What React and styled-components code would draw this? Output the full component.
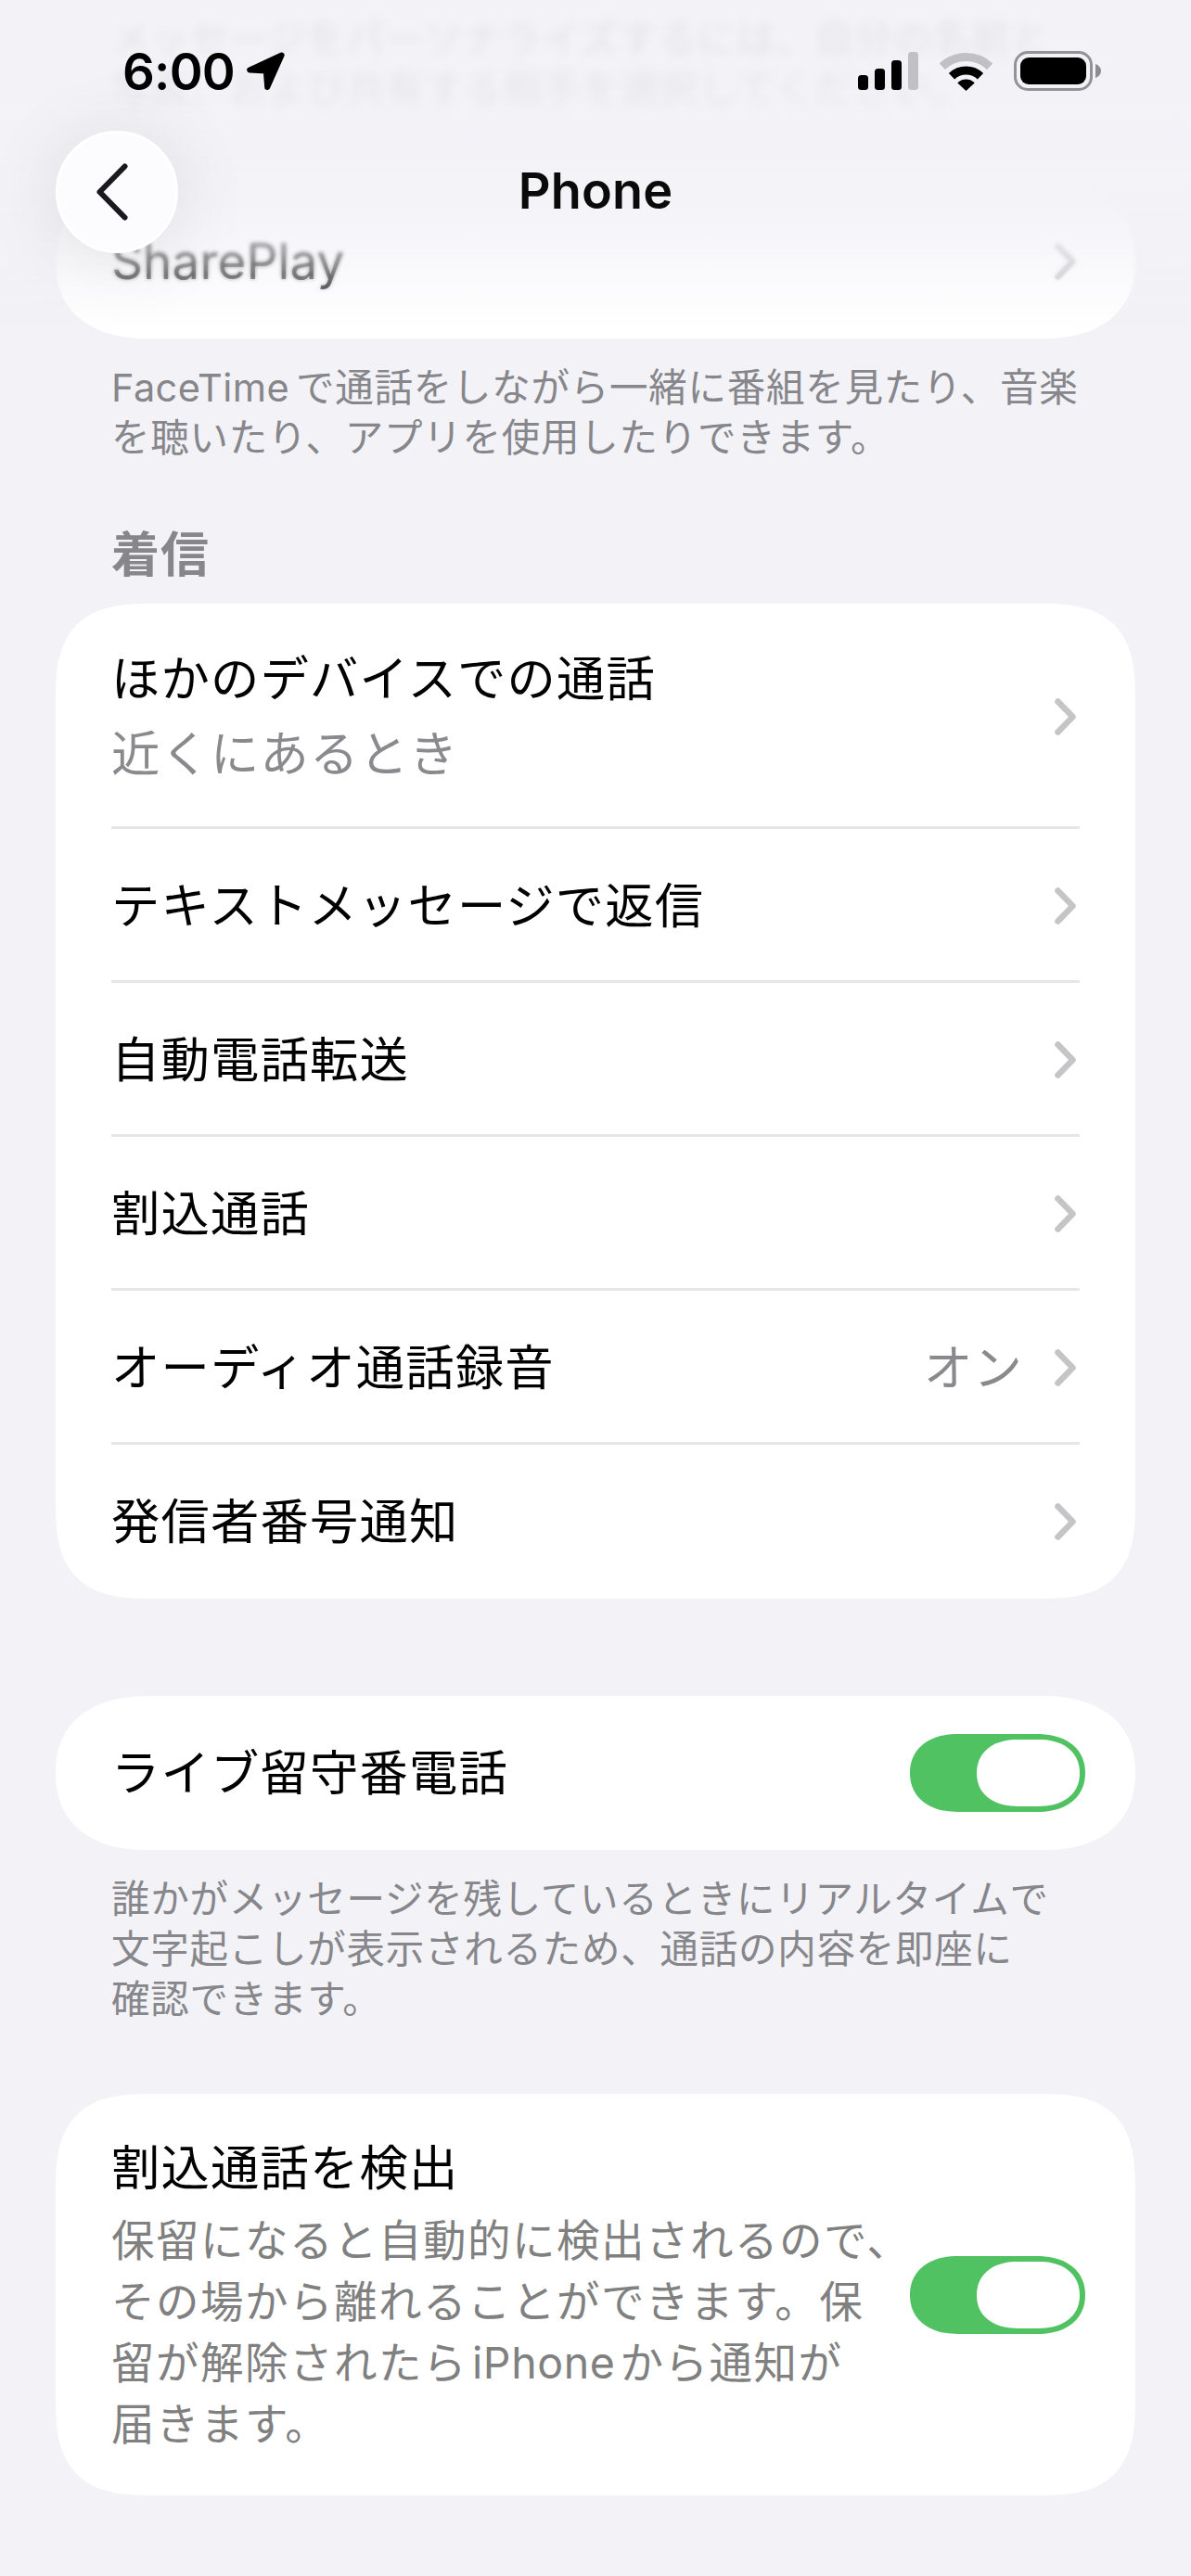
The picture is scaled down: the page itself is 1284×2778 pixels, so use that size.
import React, { useState } from 'react';
import styled, { createGlobalStyle, css } from 'styled-components';

const GlobalStyle = createGlobalStyle`
  * {
    box-sizing: border-box;
  }

  body {
    margin: 0;
    background-color: #f2f2f7;
    font-family: Inter, 'Noto Sans CJK JP', sans-serif;
    -webkit-font-smoothing: antialiased;
  }

  p,
  h1,
  h2 {
    margin: 0;
  }
`;

const StyledScreen = styled.div`
  position: relative;
  width: 1284px;
  height: 2778px;
  overflow: hidden;
  background-color: #f2f2f7;
  color: #000;
`;

const StyledHeader = styled.header`
  position: absolute;
  top: 0;
  left: 0;
  z-index: 2;
  width: 100%;
  height: 366px;
`;

const StyledFade = styled.div`
  position: absolute;
  inset: 0;
  background: linear-gradient(
    to bottom,
    rgba(242, 242, 247, 0.84) 0,
    rgba(242, 242, 247, 0.9) 130px,
    rgba(242, 242, 247, 0.94) 200px,
    rgba(242, 242, 247, 0.62) 262px,
    rgba(242, 242, 247, 0.34) 304px,
    rgba(242, 242, 247, 0) 356px
  );
`;

const StyledBlur = styled.div`
  position: absolute;
  top: 0;
  left: 0;
  width: 100%;
  height: ${({ $height }) => $height}px;
  backdrop-filter: blur(${({ $blur }) => $blur}px);
  mask-image: linear-gradient(to bottom, #000 ${({ $solid }) => $solid}px, transparent);
`;

const StyledStatusBar = styled.div`
  position: relative;
  display: flex;
  align-items: center;
  justify-content: space-between;
  height: 141px;
  padding: 12px 97px 0 132px;

  .time {
    display: flex;
    align-items: center;
    gap: 13px;
    font-size: 54.5px;
    font-weight: 600;
    line-height: 66px;
    letter-spacing: -0.8px;
  }

  .indicators {
    display: flex;
    align-items: center;
    gap: 23px;
  }

  svg {
    display: block;
  }
`;

const StyledNav = styled.div`
  position: relative;
  display: grid;
  grid-template-columns: 132px 1fr 132px;
  align-items: center;
  padding: 0 60px;

  h1 {
    padding-bottom: 2px;
    font-size: 54px;
    font-weight: 600;
    line-height: 66px;
    letter-spacing: 0.2px;
    text-align: center;
    color: #0a0a0a;
  }
`;

const StyledBackButton = styled.button`
  display: flex;
  align-items: center;
  justify-content: center;
  width: 132px;
  height: 132px;
  padding: 0 10px 0 0;
  border: 3px solid #fff;
  border-radius: 50%;
  background-color: #fcfcfe;
  box-shadow: 0 6px 84px rgba(0, 0, 0, 0.1);
`;

const StyledContent = styled.main`
  padding: 15px 60px 0;
`;

const StyledCard = styled.section`
  overflow: hidden;
  border-radius: 82px;
  background-color: #fff;

  ${({ $pill }) =>
    $pill
      ? css`
          @supports (corner-shape: squircle) {
            border-radius: 100px / 83px;
            corner-shape: superellipse(1.2);
          }
        `
      : css`
          @supports (corner-shape: squircle) {
            border-radius: 105px;
            corner-shape: superellipse(1.5);
          }
        `}
`;

const StyledRow = styled.div`
  display: flex;
  align-items: center;
  height: ${({ $height }) => $height || 166}px;
  margin: 0 60px;
  box-shadow: ${({ $divider }) => ($divider ? 'inset 0 -3px 0 #e6e6e6' : 'none')};

  .labels {
    flex: 1;
  }

  .chevron {
    flex: none;
    margin: 0 3px 0 33px;
  }
`;

const StyledLabel = styled.div`
  font-size: ${({ $latin }) => ($latin ? 53 : 52.3)}px;
  line-height: 81px;
  letter-spacing: ${({ $latin }) => ($latin ? 0.1 : 1.2)}px;
  white-space: nowrap;
  color: ${({ $muted }) => ($muted ? '#8a8a8e' : '#000')};

  /* sits closer to the top when a description follows */
  ${({ $described }) =>
    $described &&
    css`
      margin-bottom: 8px;
      line-height: 73px;
    `}
`;

const StyledSwitchRow = styled.div`
  display: flex;
  align-items: center;
  height: ${({ $height }) => $height || 166}px;
  padding: 0 54px 0 60px;

  .labels {
    flex: 1;
    min-width: 0;
  }
`;

const StyledDetail = styled.p`
  font-size: 46.5px;
  line-height: 66px;
  letter-spacing: 1.5px;
  white-space: nowrap;
  color: #808080;

  .latin {
    margin: 0 5px;
    letter-spacing: 0.6px;
  }
`;

const StyledSwitch = styled.button`
  display: flex;
  flex: none;
  justify-content: ${({ $on }) => ($on ? 'flex-end' : 'flex-start')};
  width: 189px;
  height: 84px;
  padding: 6px;
  border: 0;
  border-radius: 46px / 42px;
  background-color: ${({ $on }) => ($on ? '#50c262' : '#e3e3e6')};

  .knob {
    width: 111px;
    height: 72px;
    border-radius: 40px / 36px;
    background-color: #fff;
  }

  @supports (corner-shape: squircle) {
    border-radius: 52px / 42px;
    corner-shape: superellipse(1.15);

    .knob {
      border-radius: 44px / 36px;
      corner-shape: superellipse(1.15);
    }
  }
`;

const StyledNote = styled.p`
  margin: ${({ $top }) => $top || 0}px 60px 0;
  font-size: 41.5px;
  line-height: 54px;
  letter-spacing: 0.75px;
  white-space: nowrap;
  color: #86868b;

  .latin {
    margin-right: 7px;
    letter-spacing: 0.4px;
  }
`;

const StyledHeading = styled.h2`
  margin: 70px 60px 22px;
  font-size: 52px;
  font-weight: 700;
  line-height: 60px;
  letter-spacing: 1px;
  color: #86868b;
`;

const StyledGap = styled.div`
  height: ${({ $size }) => $size}px;
`;

const Chevron = () => (
  <svg className="chevron" width="25" height="42" viewBox="0 0 25 42" fill="none">
    <path d="M4.5 4.5 L20.5 21 L4.5 37.5" stroke="#c5c5c7" strokeWidth="6.6" strokeLinecap="round" strokeLinejoin="round" />
  </svg>
);

const LocationIcon = () => (
  <svg width="42" height="42" viewBox="0 0 42 42">
    <path d="M37.6 3.6 L3.2 19.4 L20.8 20.6 L22.2 38 Z" stroke="#000" strokeWidth="6" strokeLinejoin="round" />
  </svg>
);

const SignalIcon = () => (
  <svg width="65" height="42" viewBox="0 0 65 42">
    <rect x="0" y="25" width="11" height="16" rx="3.5" />
    <rect x="18" y="18" width="11" height="23" rx="3.5" />
    <rect x="36" y="9" width="11" height="32" rx="3.5" />
    <rect x="54" y="0" width="11" height="41" rx="3.5" fill="#c1c0c5" />
  </svg>
);

const WifiIcon = () => (
  <svg width="57" height="42" viewBox="0 0 57 42" fill="none">
    <path d="M2.8 15.7 A37.4 37.4 0 0 1 54.2 15.7" stroke="#c1c0c5" strokeWidth="9" />
    <path d="M13 26.3 A22.4 22.4 0 0 1 44 26.3" stroke="#000" strokeWidth="9" />
    <path d="M20.4 33.4 A12 12 0 0 1 36.6 33.4 L28.5 41 Z" fill="#000" stroke="#000" strokeWidth="1.6" strokeLinejoin="round" />
  </svg>
);

const BatteryIcon = () => (
  <svg width="94" height="43" viewBox="0 0 94 43">
    <rect x="1.5" y="1.5" width="82" height="40" rx="13.5" fill="none" stroke="#939297" strokeWidth="3" />
    <rect x="7" y="7" width="71" height="29" rx="9" />
    <path d="M88 14 C91.5 15.5 94 18 94 21.5 C94 25 91.5 27.5 88 29 Z" fill="#8d8d91" />
  </svg>
);

const BackIcon = () => (
  <svg width="36" height="64" viewBox="0 0 36 64" fill="none">
    <path d="M31.5 4.5 L4.5 32 L31.5 59.5" stroke="#1a1a1e" strokeWidth="6" strokeLinecap="round" strokeLinejoin="round" />
  </svg>
);

const Switch = ({ label }) => {
  const [on, setOn] = useState(true);

  return (
    <StyledSwitch role="switch" aria-checked={on} aria-label={label} $on={on} onClick={() => setOn(!on)}>
      <span className="knob" />
    </StyledSwitch>
  );
};

const LinkRow = ({ title, subtitle, value, height, divider, latin }) => (
  <StyledRow $height={height} $divider={divider}>
    <div className="labels">
      <StyledLabel $latin={latin}>{title}</StyledLabel>
      {subtitle && <StyledLabel $muted>{subtitle}</StyledLabel>}
    </div>
    {value && <StyledLabel $muted>{value}</StyledLabel>}
    <Chevron />
  </StyledRow>
);

const incomingRows = [
  { title: 'ほかのデバイスでの通話', subtitle: '近くにあるとき', height: 243 },
  { title: 'テキストメッセージで返信' },
  { title: '自動電話転送' },
  { title: '割込通話' },
  { title: 'オーディオ通話録音', value: 'オン' },
  { title: '発信者番号通知' },
];

const App = () => (
  <StyledScreen lang="ja">
    <GlobalStyle />

    <StyledHeader>
      <StyledBlur $height={240} $solid={140} $blur={5} />
      <StyledBlur $height={330} $solid={270} $blur={2} />
      <StyledFade />
      <StyledStatusBar>
        <div className="time">
          <span>6:00</span>
          <LocationIcon />
        </div>
        <div className="indicators">
          <SignalIcon />
          <WifiIcon />
          <BatteryIcon />
        </div>
      </StyledStatusBar>
      <StyledNav>
        <StyledBackButton aria-label="戻る">
          <BackIcon />
        </StyledBackButton>
        <h1>Phone</h1>
      </StyledNav>
    </StyledHeader>

    <StyledContent>
      <StyledNote>
        メッセージをパーソナライズするには、自分の名前と
        <br />
        写真、および共有する相手を選択してください。
      </StyledNote>
      <StyledGap $size={76} />

      <StyledCard $pill>
        <LinkRow title="SharePlay" latin />
      </StyledCard>
      <StyledNote $top={26}>
        <span className="latin">FaceTime</span>
        で通話をしながら一緒に番組を見たり、音楽
        <br />
        を聴いたり、アプリを使用したりできます。
      </StyledNote>

      <StyledHeading>着信</StyledHeading>
      <StyledCard>
        {incomingRows.map((row, i) => (
          <LinkRow key={row.title} {...row} divider={i < incomingRows.length - 1} />
        ))}
      </StyledCard>
      <StyledGap $size={105} />

      <StyledCard $pill>
        <StyledSwitchRow>
          <div className="labels">
            <StyledLabel>ライブ留守番電話</StyledLabel>
          </div>
          <Switch label="ライブ留守番電話" />
        </StyledSwitchRow>
      </StyledCard>
      <StyledNote $top={26}>
        誰かがメッセージを残しているときにリアルタイムで
        <br />
        文字起こしが表示されるため、通話の内容を即座に
        <br />
        確認できます。
      </StyledNote>
      <StyledGap $size={75} />

      <StyledCard>
        <StyledSwitchRow $height={433}>
          <div className="labels">
            <StyledLabel $described>割込通話を検出</StyledLabel>
            <StyledDetail>
              保留になると自動的に検出されるので、
              <br />
              その場から離れることができます。保
              <br />
              留が解除されたら<span className="latin">iPhone</span>から通知が
              <br />
              届きます。
            </StyledDetail>
          </div>
          <Switch label="割込通話を検出" />
        </StyledSwitchRow>
      </StyledCard>
    </StyledContent>
  </StyledScreen>
);

export default App;
